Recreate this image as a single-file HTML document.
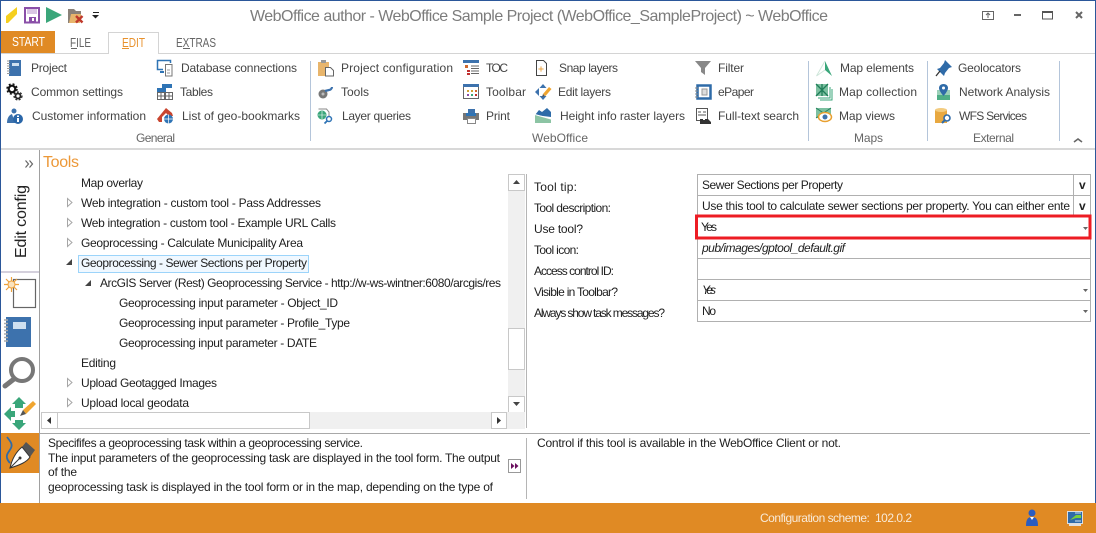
<!DOCTYPE html>
<html>
<head>
<meta charset="utf-8">
<style>
html,body{margin:0;padding:0;background:#fff}
svg{display:block;position:absolute;left:0;top:0}
text{font-family:"Liberation Sans",sans-serif;font-size:12px;fill:#3f3f46}
.r{fill:#444}
.d{fill:#1e1e1e}
.g{fill:#666}
.i{font-style:italic}
</style>
</head>
<body>
<svg width="1096" height="533" viewBox="0 0 1096 533" xmlns="http://www.w3.org/2000/svg">
<rect width="1096" height="533" fill="#fff"/>
<!-- title bar -->
<path d="M6 16 17 7v7L8 23H6z" fill="#f5cf1e"/>
<rect x="25" y="8" width="14" height="14.500" fill="#fff" stroke="#8a4fa8" stroke-width="2"/>
<rect x="27" y="9" width="10" height="5" fill="#d9c6e4"/><rect x="29" y="17" width="7" height="6" fill="#8a4fa8"/><rect x="32" y="18" width="2" height="3" fill="#fff"/>
<path d="M46 7 62 15 46 23z" fill="#3aa67a"/>
<path d="M68 9h6l2 2h5v5H76l-4 7h-4z" fill="#8a8178"/><path d="M71 14h10l-1 9H69z" fill="#e8b56c"/>
<path d="M76 16l6.500 6.500m0-6.500-6.500 6.500" stroke="#c0392b" stroke-width="2.400"/>
<rect x="93" y="12" width="6" height="1" fill="#222"/><path d="M92 15h7l-3.500 3.500z" fill="#222"/>
<text x="250" y="21" textLength="578" style="font-size:16px;fill:#7c7c7c">WebOffice author - WebOffice Sample Project (WebOffice_SampleProject) ~ WebOffice</text>
<rect x="982.500" y="11.500" width="11" height="8" fill="none" stroke="#666"/>
<path d="M988 18v-5m-2 2 2-2 2 2" fill="none" stroke="#666"/>
<rect x="1014" y="14" width="7" height="2" fill="#666"/>
<rect x="1042.500" y="11.500" width="10" height="7.500" fill="none" stroke="#555"/><rect x="1042" y="11" width="11" height="2" fill="#555"/>
<path d="M1076 12l6 6m0-6-6 6" stroke="#666" stroke-width="2"/>
<!-- tabs -->
<rect x="1" y="31" width="54" height="22" fill="#e08a24"/>
<text x="12" y="46" textLength="33" lengthAdjust="spacingAndGlyphs" style="font-size:13px;fill:#fff">START</text>
<text x="70" y="47" textLength="21" lengthAdjust="spacingAndGlyphs" class="g" style="font-size:13px">FILE</text><rect x="71" y="48" width="6" height="1" fill="#666"/>
<rect x="1" y="53" width="1094" height="1" fill="#d4d4d4"/>
<path d="M108.500 53.500V32.500H158.500V53.500" fill="#fff" stroke="#d4d4d4"/><rect x="109" y="53" width="49" height="1" fill="#fff"/>
<text x="122" y="47" textLength="23" lengthAdjust="spacingAndGlyphs" style="font-size:13px;fill:#e8912c">EDIT</text><rect x="122" y="48" width="7" height="1" fill="#e8912c"/>
<text x="176" y="47" textLength="40" lengthAdjust="spacingAndGlyphs" class="g" style="font-size:13px">EXTRAS</text><rect x="183" y="48" width="7" height="1" fill="#666"/>
<!-- ribbon bottom -->
<rect x="1" y="148" width="1094" height="2" fill="#d8d8d8"/>
<g fill="#b4c5da">
<rect x="310" y="61" width="1" height="80"/><rect x="808" y="61" width="1" height="80"/><rect x="927" y="61" width="1" height="80"/><rect x="1059" y="61" width="1" height="80"/>
</g>
<path d="M1074 142l4-3 4 3" fill="none" stroke="#666" stroke-width="1.600"/>
<!-- ribbon text -->
<g>
<text class="r" x="31" y="72" textLength="36">Project</text>
<text class="r" x="31" y="96" textLength="92">Common settings</text>
<text class="r" x="32" y="120" textLength="114">Customer information</text>
<text class="r" x="181" y="72" textLength="116">Database connections</text>
<text class="r" x="180" y="96" textLength="33">Tables</text>
<text class="r" x="182" y="120" textLength="118">List of geo-bookmarks</text>
<text class="g" x="136" y="142" textLength="39">General</text>
<text class="r" x="341" y="72" textLength="112">Project configuration</text>
<text class="r" x="341" y="96" textLength="28">Tools</text>
<text class="r" x="342" y="120" textLength="69">Layer queries</text>
<text class="r" x="486" y="72" textLength="22">TOC</text>
<text class="r" x="486" y="96" textLength="40">Toolbar</text>
<text class="r" x="486" y="120" textLength="24">Print</text>
<text class="r" x="559" y="72" textLength="59">Snap layers</text>
<text class="r" x="558" y="96" textLength="53">Edit layers</text>
<text class="r" x="560" y="120" textLength="125">Height info raster layers</text>
<text class="g" x="532" y="142" textLength="56">WebOffice</text>
<text class="r" x="718" y="72" textLength="26">Filter</text>
<text class="r" x="718" y="96" textLength="36">ePaper</text>
<text class="r" x="718" y="120" textLength="81">Full-text search</text>
<text class="r" x="840" y="72" textLength="74">Map elements</text>
<text class="r" x="839" y="96" textLength="78">Map collection</text>
<text class="r" x="839" y="120" textLength="56">Map views</text>
<text class="g" x="854" y="142" textLength="29">Maps</text>
<text class="r" x="958" y="72" textLength="63">Geolocators</text>
<text class="r" x="959" y="96" textLength="91">Network Analysis</text>
<text class="r" x="959" y="120" textLength="68">WFS Services</text>
<text class="g" x="973" y="142" textLength="41">External</text>
</g>
<!-- ribbon icons: General -->
<rect x="9" y="60" width="12" height="16" fill="#3d72ad"/><rect x="12" y="63" width="7" height="3" fill="#cfe0f0"/>
<path d="M7 61h3M7 63.500h3M7 66h3M7 68.500h3M7 71h3M7 73.500h3" stroke="#999"/>
<circle cx="12" cy="89" r="3.300" fill="none" stroke="#111" stroke-width="2.200"/><circle cx="12" cy="89" r="5" fill="none" stroke="#111" stroke-width="1.500" stroke-dasharray="2 2"/>
<circle cx="18" cy="96" r="2.500" fill="none" stroke="#222" stroke-width="1.800"/><circle cx="18" cy="96" r="4" fill="none" stroke="#222" stroke-width="1.200" stroke-dasharray="2 1.500"/>
<circle cx="14" cy="111" r="2.500" fill="#3d72ad"/><path d="M7 123c0-5 2-8 5-9l3 9z" fill="#3d72ad"/>
<circle cx="18" cy="119" r="5" fill="#2a66a8"/><rect x="17" y="118" width="2" height="4" fill="#fff"/><rect x="17" y="115.500" width="2" height="1.500" fill="#fff"/>
<path d="M163 69.500h-5.500v-9h13v2.500" fill="none" stroke="#2f74b5" stroke-width="1.500"/><rect x="160" y="71" width="4" height="2" fill="#2f74b5"/><rect x="165.500" y="64.500" width="6.500" height="11.500" fill="#fff" stroke="#777"/><path d="M167 73h3M167 70h3" stroke="#999"/>
<rect x="162" y="84" width="10" height="4" fill="#2f74b5"/><rect x="157" y="88" width="9" height="4" fill="#2f74b5"/>
<path d="M157.500 92.500h7v7h-7zM165.500 92.500h7v7h-7zM157.500 96h15M161 92v8M169 92v8" fill="none" stroke="#666"/>
<path d="M157 119l9-11 6 5 1 3h-4l-3-3-4 4v5h-3l-2-3z" fill="#c9452f"/><circle cx="168.500" cy="119" r="4.500" fill="#2f74b5"/><path d="M164 119h9M168.500 114.500v9" stroke="#fff" stroke-width=".7"/>
<!-- WebOffice group -->
<rect x="318" y="62" width="11" height="14" fill="#e8b56c"/><rect x="321" y="60" width="5" height="3" fill="#999"/><path d="M325.500 67.500h5l3 3v5.500h-8z" fill="#fff" stroke="#666"/>
<circle cx="323" cy="94" r="4.500" fill="#777"/><circle cx="323" cy="94" r="1.500" fill="#bbb"/><path d="M325 91l4-1c1 0 3-1 3-3" fill="none" stroke="#3d72ad" stroke-width="2.200"/>
<path d="M318.500 109h8l2.500 3v4" fill="none" stroke="#888"/><circle cx="322" cy="115" r="4.500" fill="#3aa67a"/><path d="M318 115h8M322 111v8" stroke="#fff" stroke-width=".6"/><circle cx="329" cy="119" r="2.500" fill="#fff" stroke="#2f74b5" stroke-width="1.500"/><path d="M327 121l-2.500 2.500" stroke="#2f74b5" stroke-width="1.800"/>
<rect x="463" y="60" width="16" height="3" fill="#3d72ad"/><path d="M471 66h8M471 68.500h8M471 71h8M471 73.500h8" stroke="#666"/><rect x="465" y="65" width="3" height="3" fill="#d0682c"/><rect x="467" y="70" width="3" height="2" fill="#c03030"/><rect x="467" y="73" width="3" height="2" fill="#c03030"/>
<rect x="463.500" y="85.500" width="15" height="13" fill="#fff" stroke="#666"/><rect x="463" y="84" width="16" height="3" fill="#3d72ad"/><path d="M467 90h2v2h-2z" fill="#d0a030"/><path d="M471 90h2v2h-2z" fill="#d0a030"/><path d="M475 90h2v2h-2z" fill="#d0682c"/><path d="M467 94h2v2h-2z" fill="#8a4fa8"/><path d="M471 94h2v2h-2z" fill="#3aa67a"/><path d="M475 94h2v2h-2z" fill="#c03030"/>
<rect x="468" y="109" width="7" height="4" fill="#3d72ad"/><rect x="463" y="113" width="16" height="7" fill="#777"/><rect x="466" y="113" width="10" height="3" fill="#2f74b5"/><rect x="467.500" y="118.500" width="8" height="5" fill="#fff" stroke="#888"/>
<path d="M536.500 60.500h7l3 3v12h-10z" fill="#fff" stroke="#444"/><circle cx="541" cy="69" r="1.500" fill="#e8912c"/><path d="M538 69h6M541 66v6" stroke="#f0c78c"/>
<path d="M543 84l3.500 4h-7zM543 100l3.500-4h-7zM535 92l4-4v8z" fill="#3d72ad"/><path d="M543 94l6-7 2.500 2-6 7z" fill="#f0a530"/><path d="M543 94l-1 3 3-1z" fill="#555"/>
<path d="M535 115l4-5 3 2 5-4 4 4v5z" fill="#2d6ba8"/><path d="M535 115l16 4v4H535z" fill="#8cc4a4"/><path d="M535 114.500l16 4.500" stroke="#fff"/>
<path d="M695 61h16l-6 7v7l-4-3v-4z" fill="#888"/>
<rect x="697.500" y="85.500" width="13" height="13" fill="#fff" stroke="#2f6ba8" stroke-width="2.500"/><rect x="702" y="89" width="5" height="6" fill="#ddd" stroke="#999"/><path d="M695 88h3M695 91h3M695 94h3M695 97h3" stroke="#888"/>
<rect x="696.500" y="108.500" width="11" height="12" fill="#fff" stroke="#555"/><path d="M698 112h3M703 112h3M698 115h8" stroke="#555"/><path d="M700 119h3v1h2v-1h3l3 3v2h-11z" fill="#333"/>
<!-- Maps -->
<path d="M825 61l7 15-7-6z" fill="#3aa67a"/><path d="M825 61l-8.500 15 8.500-6" fill="none" stroke="#cfe6da"/>
<rect x="816" y="84" width="12" height="12" fill="#7cc0a0"/><path d="M816 84l12 12M828 84L816 96M822 84v12" stroke="#1f7d58" stroke-width="1.300"/><path d="M818 98h12V87" fill="none" stroke="#3aa67a"/><path d="M820 100h12V89" fill="none" stroke="#3aa67a"/>
<rect x="816" y="108" width="15" height="10" fill="#7cc0a0"/><path d="M816 108l15 10M831 108l-15 10" stroke="#1f7d58" stroke-width=".8"/><ellipse cx="825" cy="117" rx="6.500" ry="4.500" fill="#fff" stroke="#e8a030" stroke-width="1.500"/><circle cx="825" cy="117" r="2.500" fill="#3d72ad"/>
<!-- External -->
<path d="M945 60l7 7-3 1-4 5-1 3-7-7 3-1 4-5z" fill="#2f6ba8"/><path d="M940 71l-4 5" stroke="#333" stroke-width="1.300"/>
<path d="M937 94h13v6H937z" fill="#4fae86"/><path d="M937 90h13v5H937z" fill="#9bd0b8"/><path d="M943.500 84c3 0 4.500 2 4.500 4 0 3-4.500 8-4.500 8s-4.500-5-4.500-8c0-2 1.500-4 4.500-4z" fill="#2f6ba8"/><circle cx="943.500" cy="88" r="1.500" fill="#fff"/>
<path d="M935 110h12v13h-12z" fill="#e8a840"/><ellipse cx="941" cy="110" rx="6" ry="2" fill="#f3cc80"/><circle cx="947" cy="118" r="3" fill="#fff" stroke="#2f6ba8" stroke-width="1.600"/><path d="M945 120l-3 3" stroke="#2f6ba8" stroke-width="2"/>
<!-- left nav -->
<path d="M25.500 160.500l3 3.500-3 3.500M29.500 160.500l3 3.500-3 3.500" fill="none" stroke="#666" stroke-width="1.200"/>
<text transform="translate(26 258) rotate(-90)" x="0" y="0" textLength="73" style="font-size:16px;fill:#222">Edit config</text>
<rect x="1" y="271" width="38" height="2" fill="#d4d0dc"/>
<rect x="13.500" y="279.500" width="22" height="28" fill="#fff" stroke="#666" stroke-width="1.200"/>
<g stroke="#eea23c" stroke-width="1.200"><path d="M4 284.500h15M11.500 277v15M6 279l11 11M17 279l-11 11"/></g><circle cx="11.500" cy="284.500" r="3.500" fill="#fbe3bd" stroke="#eea23c"/>
<rect x="6" y="317" width="25" height="30" fill="#3d72ad"/><rect x="13" y="322" width="13" height="7" fill="#cfe0f0"/>
<path d="M4 320h4M4 323.500h4M4 327h4M4 330.500h4M4 334h4M4 337.500h4M4 341h4" stroke="#aaa" stroke-width="1.600"/>
<circle cx="22" cy="370" r="11" fill="#fff" stroke="#777" stroke-width="4"/><path d="M14 379l-9 7" stroke="#777" stroke-width="5" stroke-linecap="round"/>
<path d="M19 397l7 7h-3v4h-8v-4h-3z" fill="#3aa67a"/><path d="M19 430l7-7h-3v-3h-8v3h-3z" fill="#3aa67a"/><path d="M4 414l7-7v4h4v6h-4v4z" fill="#3aa67a"/>
<path d="M23 410l10-9 3 3-10 10z" fill="#f0a530"/><path d="M23 410l-3 6 6-2z" fill="#555"/>
<rect x="1" y="433" width="38" height="40" fill="#e08a24"/>
<path d="M7 437c3 4 6 7 4 11-2 4-5 6-4 10 .5 2 1 3 3 5" fill="none" stroke="#2f6ba8" stroke-width="1.800"/>
<path d="M26 442l9 8-5 7-8-10z" fill="#555"/><path d="M22 447l8 10c-3 5-10 8-20 11 2-9 6-16 12-21z" fill="#fff" stroke="#333"/><path d="M10 468l9-9" stroke="#333"/><circle cx="20" cy="458" r="1.500" fill="#333"/>
<rect x="39" y="150" width="1" height="353" fill="#a0a0a0"/>
<rect x="0" y="0" width="1" height="533" fill="#2b579a"/><rect x="0" y="0" width="1096" height="1" fill="#2b579a"/><rect x="1095" y="0" width="1" height="533" fill="#2b579a"/>
<!-- tools -->
<text x="43" y="167" textLength="36" style="font-size:16px;fill:#ec9838">Tools</text>
<rect x="78.500" y="255.500" width="230" height="17" fill="#f0f8ff" stroke="#9cd4fa"/>
<text class="d" x="81" y="187" textLength="62">Map overlay</text>
<text class="d" x="81" y="207" textLength="240">Web integration - custom tool - Pass Addresses</text>
<text class="d" x="81" y="227" textLength="255">Web integration - custom tool - Example URL Calls</text>
<text class="d" x="81" y="247" textLength="222">Geoprocessing - Calculate Municipality Area</text>
<text class="d" x="81" y="267" textLength="226">Geoprocessing - Sewer Sections per Property</text>
<text class="d" x="100" y="287" textLength="401">ArcGIS Server (Rest) Geoprocessing Service - http://w-ws-wintner:6080/arcgis/res</text>
<text class="d" x="119" y="307" textLength="219">Geoprocessing input parameter - Object_ID</text>
<text class="d" x="119" y="327" textLength="231">Geoprocessing input parameter - Profile_Type</text>
<text class="d" x="119" y="347" textLength="198">Geoprocessing input parameter - DATE</text>
<text class="d" x="81" y="367" textLength="35">Editing</text>
<text class="d" x="81" y="387" textLength="136">Upload Geotagged Images</text>
<text class="d" x="81" y="407" textLength="108">Upload local geodata</text>
<g fill="#fff" stroke="#a6a6a6">
<path d="M67.500 198.500l4.500 4-4.500 4z"/><path d="M67.500 218.500l4.500 4-4.500 4z"/><path d="M67.500 238.500l4.500 4-4.500 4z"/><path d="M67.500 378.500l4.500 4-4.500 4z"/><path d="M67.500 398.500l4.500 4-4.500 4z"/>
</g>
<path d="M72 259v6h-6z" fill="#444"/><path d="M91 280v6h-6z" fill="#444"/>
<!-- scrollbars -->
<rect x="508" y="174" width="17" height="238" fill="#f0f0f0"/>
<g fill="#fff" stroke="#c8c8c8"><rect x="508.500" y="174.500" width="16" height="16"/><rect x="508.500" y="328.500" width="16" height="41"/><rect x="508.500" y="396.500" width="16" height="16"/></g>
<path d="M513 184l3.500-4 3.500 4z" fill="#444"/><path d="M513 402l3.500 4 3.500-4z" fill="#444"/>
<rect x="41" y="412" width="484" height="17" fill="#f0f0f0"/>
<g fill="#fff" stroke="#c8c8c8"><rect x="41.500" y="412.500" width="16" height="16"/><rect x="57.500" y="412.500" width="252" height="16"/><rect x="491.500" y="412.500" width="15" height="16"/></g>
<path d="M51 417l-4 3.500 4 3.500z" fill="#333"/><path d="M497 417l4 3.500-4 3.500z" fill="#333"/>
<rect x="526" y="174" width="1" height="254" fill="#b5b5b5"/>
<!-- properties -->
<text class="d" x="534" y="191" textLength="43">Tool tip:</text>
<text class="d" x="534" y="212" textLength="77">Tool description:</text>
<text class="d" x="534" y="233" textLength="49">Use tool?</text>
<text class="d" x="534" y="254" textLength="45">Tool icon:</text>
<text class="d" x="534" y="275" textLength="80">Access control ID:</text>
<text class="d" x="534" y="296" textLength="84">Visible in Toolbar?</text>
<text class="d" x="534" y="317" textLength="131">Always show task messages?</text>
<g fill="none" stroke="#b0b0b0">
<path d="M697.500 174.500V321.500H1090.500V174.500zM697.500 195.500H1090.500M697.500 216.500H1090.500M697.500 237.500H1090.500M697.500 258.500H1090.500M697.500 279.500H1090.500M697.500 300.500H1090.500M1073.500 174.500V216.500"/>
</g>
<text class="d" x="702" y="189" textLength="141">Sewer Sections per Property</text>
<text class="d" x="702" y="210" textLength="368">Use this tool to calculate sewer sections per property. You can either ente</text>
<text class="d" x="701" y="231" textLength="16">Yes</text>
<text class="d i" x="702" y="252" textLength="143">pub/images/gptool_default.gif</text>
<text class="d i" x="702" y="294" textLength="14">Yes</text>
<text class="d" x="702" y="315" textLength="14">No</text>
<text x="1079" y="189" style="font-weight:bold;fill:#222">v</text>
<text x="1079" y="210" style="font-weight:bold;fill:#222">v</text>
<rect x="696.500" y="216" width="393.500" height="22" fill="none" stroke="#ed1c24" stroke-width="3"/>
<g fill="#666"><path d="M1083 227h5l-2.500 3z"/><path d="M1083 289h5l-2.500 3z"/><path d="M1083 310h5l-2.500 3z"/></g>
<!-- description -->
<rect x="40" y="433" width="1050" height="1" fill="#a8a8a8"/>
<text class="d" x="48" y="447" textLength="315">Specififes a geoprocessing task within a geoprocessing service.</text>
<text class="d" x="48" y="462" textLength="452">The input parameters of the geoprocessing task are displayed in the tool form. The output</text>
<text class="d" x="48" y="476" textLength="29">of the</text>
<text class="d" x="48" y="491" textLength="445">geoprocessing task is displayed in the tool form or in the map, depending on the type of</text>
<rect x="508.500" y="459.500" width="12" height="13" fill="#fff" stroke="#999"/>
<path d="M511 463l3.500 3-3.500 3zM515 463l3.500 3-3.500 3z" fill="#6a0f5e"/>
<rect x="526" y="438" width="1" height="61" fill="#b5b5b5"/>
<text class="d" x="537" y="447" textLength="304">Control if this tool is available in the WebOffice Client or not.</text>
<!-- status -->
<rect x="0" y="503" width="1096" height="30" fill="#e08a24"/>
<text x="760" y="522" textLength="152" style="fill:#f8ead8" xml:space="preserve">Configuration scheme:  102.0.2</text>
<circle cx="1032" cy="513" r="3.500" fill="#2a5cc0"/><path d="M1026 526c0-7 2-9 6-9s6 2 6 9z" fill="#2a5cc0"/><path d="M1030 517l2 3 2-3z" fill="#fff"/>
<rect x="1067.500" y="511.500" width="15" height="12" fill="#2f6ba8" stroke="#ddd"/><path d="M1070 520l6-5h5v3h-5z" fill="#7ad03a"/><path d="M1075 513h6M1075 521h6" stroke="#cfe0f0"/><rect x="1069" y="524" width="12" height="2" fill="#e0e0e0"/>
</svg>
</body>
</html>
